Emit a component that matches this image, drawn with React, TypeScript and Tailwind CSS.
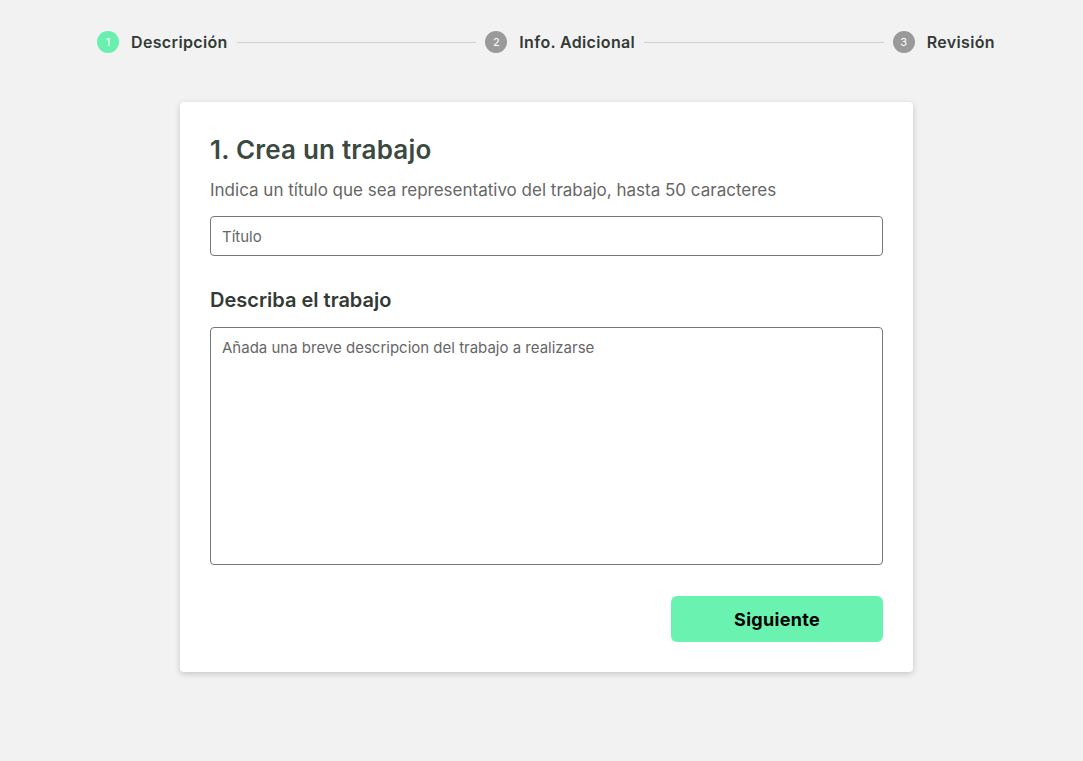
import { Fragment } from 'react';

const steps = [
  { n: 1, label: 'Descripción', active: true },
  { n: 2, label: 'Info. Adicional', active: false },
  { n: 3, label: 'Revisión', active: false },
];

const Stepper = () => (
  <div className="flex items-center pl-[97px] pr-[88px] pt-[31px] h-[53px]">
    {steps.map((s, i) => (
      <Fragment key={s.n}>
        <div
          className={`w-[22px] h-[22px] shrink-0 rounded-full flex items-center justify-center text-[11px] text-white ${
            s.active ? 'bg-[#69f0ae]' : 'bg-[#9a9a9a]'
          }`}
        >
          {s.n}
        </div>
        <span className="ml-[12px] text-[16px] tracking-[0.35px] font-semibold text-[#333a36] whitespace-nowrap">
          {s.label}
        </span>
        {i < steps.length - 1 && <div className="flex-1 h-px bg-[#cfcfcf] mx-[9px]" />}
      </Fragment>
    ))}
  </div>
);

export default function App() {
  return (
    <div className="min-h-[761px] bg-[#f2f2f2] font-['Inter','Noto_Sans',sans-serif]">
      <Stepper />
      <div className="flex justify-center pl-[10px] pt-[49px]">
        <div className="w-[733px] bg-white rounded-[4px] shadow-[0_2px_6px_rgba(0,0,0,0.18)] px-[30px] pt-[30px] pb-[30px]">
          <h1 className="text-[26px] leading-[36px] font-semibold text-[#3b4a41] tracking-[0.2px]">1. Crea un trabajo</h1>
          <p className="mt-[12px] text-[17px] leading-[20px] text-[#666]">
            Indica un título que sea representativo del trabajo, hasta 50 caracteres
          </p>
          <input
            placeholder="Título"
            className="mt-[16px] w-full h-[40px] border border-[#777] rounded-[4px] px-[11px] text-[15px] text-[#444] placeholder:text-[#666] outline-none"
          />
          <h2 className="mt-[31px] text-[20px] leading-[26px] font-semibold text-[#333a36]">Describa el trabajo</h2>
          <textarea
            placeholder="Añada una breve descripcion del trabajo a realizarse"
            className="mt-[14px] block w-full h-[238px] border border-[#777] rounded-[4px] px-[11px] py-[10px] text-[15px] leading-[20px] text-[#444] placeholder:text-[#666] outline-none resize-none"
          />
          <div className="flex justify-end mt-[31px]">
            <button className="w-[212px] h-[46px] rounded-[6px] bg-[#69f2b0] text-[18px] tracking-[0.3px] font-bold text-black">
              Siguiente
            </button>
          </div>
        </div>
      </div>
    </div>
  );
}
